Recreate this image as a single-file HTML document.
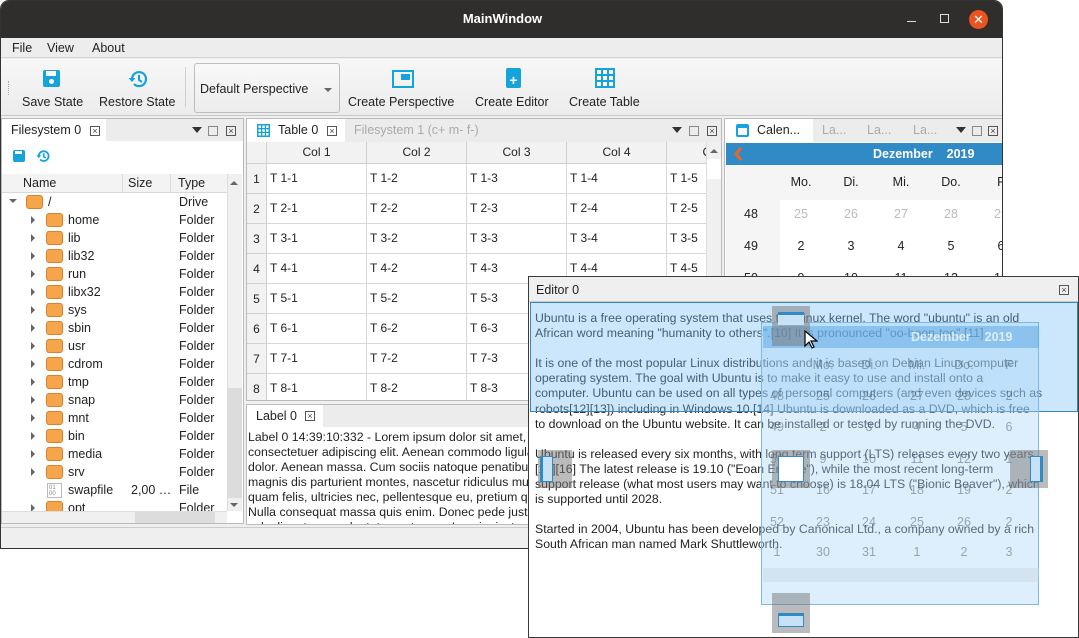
<!DOCTYPE html>
<html><head><meta charset="utf-8"><style>
*{box-sizing:border-box;margin:0;padding:0}
body{width:1079px;height:638px;background:#fff;position:relative;overflow:hidden;font-family:"Liberation Sans",sans-serif;font-size:12px;color:#222}
.a{position:absolute}
.nw{white-space:nowrap}
.x{position:absolute;width:10px;height:10px;border:1px solid #555;font-size:9px;line-height:8px;text-align:center;color:#444}
.fold{position:absolute;width:17px;height:14px;background:#f5a54a;border:1px solid #d9822b;border-radius:3px}
.arr{position:absolute;width:0;height:0;border-top:4px solid transparent;border-bottom:4px solid transparent;border-left:4px solid #666}
.cell{position:absolute;border-right:1px solid #d8d8d8;border-bottom:1px solid #d8d8d8;padding-left:3px;line-height:28px;background:#fff}
.hdr{position:absolute;background:#f2f2f2;border-right:1px solid #d0d0d0;border-bottom:1px solid #d0d0d0;text-align:center;line-height:21px}
</style></head><body>
<div class="a" style="left:0;top:0;width:1003px;height:549px;background:#efefef;border:1px solid #333;border-radius:9px 9px 0 0;overflow:hidden">
 <div class="a" style="left:0;top:0;width:1003px;height:37px;background:#302e2d"></div>
 <div class="a nw" style="left:0;top:10px;width:1003px;text-align:center;color:#fff;font-weight:bold;font-size:13px">MainWindow</div>
 <div class="a" style="left:906px;top:20px;width:9px;height:1px;background:#ddd"></div>
 <div class="a" style="left:939px;top:13px;width:9px;height:9px;border:1px solid #ddd"></div>
 <div class="a" style="left:968px;top:9px;width:19px;height:19px;border-radius:50%;background:#e95420;color:#fff;text-align:center;line-height:19px;font-size:13px">✕</div>
 <div class="a" style="left:0;top:37px;width:1003px;height:20px;background:#ededed;border-bottom:1px solid #d4d4d4"></div>
 <div class="a nw" style="left:11px;top:40px;font-size:12.5px">File</div>
 <div class="a nw" style="left:46px;top:40px;font-size:12.5px">View</div>
 <div class="a nw" style="left:91px;top:40px;font-size:12.5px">About</div>
 <div class="a" style="left:0;top:58px;width:1003px;height:57px;background:linear-gradient(#f7f7f7,#ececec);border-bottom:1px solid #c8c8c8"></div>
 <div class="a" style="left:7px;top:80px;width:2px;height:14px;border-left:1px dotted #aaa"></div>
 <div class="a" style="left:42px;top:69px;width:17px;height:17px;background:#15a3dc;border-radius:2px"><div class="a" style="left:3px;top:1px;width:10px;height:5px;background:#fff"></div><div class="a" style="left:6px;top:9px;width:5px;height:5px;border-radius:50%;background:#fff"></div></div>
 <div class="a nw" style="left:21px;top:94px;font-size:12.5px">Save State</div>
 <svg class="a" style="left:127px;top:68px" width="20" height="20" viewBox="0 0 20 20"><path d="M4 10a7 7 0 1 1 2 5" fill="none" stroke="#15a3dc" stroke-width="2.2"/><path d="M0.5 9h7l-3.5 4z" fill="#15a3dc"/><path d="M11 6v5l3 2" fill="none" stroke="#15a3dc" stroke-width="2"/></svg>
 <div class="a nw" style="left:98px;top:94px;font-size:12.5px">Restore State</div>
 <div class="a" style="left:184px;top:66px;width:1px;height:40px;background:#d0d0d0"></div>
 <div class="a" style="left:193px;top:62px;width:146px;height:50px;border:1px solid #bdbdbd;border-radius:3px;background:linear-gradient(#f9f9f9,#ececec)"></div>
 <div class="a nw" style="left:199px;top:81px;font-size:12.5px">Default Perspective</div>
 <div class="a" style="left:323px;top:87px;border-left:4px solid transparent;border-right:4px solid transparent;border-top:4px solid #666"></div>
 <div class="a" style="left:391px;top:69px;width:22px;height:18px;border:2px solid #15a3dc"><div class="a" style="left:7px;top:2px;width:9px;height:6px;background:#15a3dc"></div></div>
 <div class="a nw" style="left:347px;top:94px;font-size:12.5px">Create Perspective</div>
 <div class="a" style="left:505px;top:67px;width:15px;height:20px;background:#15a3dc;border-radius:2px;color:#fff;text-align:center;font-weight:bold;font-size:14px;line-height:24px">+</div>
 <div class="a nw" style="left:474px;top:94px;font-size:12.5px">Create Editor</div>
 <svg class="a" style="left:594px;top:67px" width="20" height="20"><rect x="0" y="0" width="20" height="20" fill="#15a3dc"/><g fill="#fff"><rect x="2" y="2" width="4" height="4"/><rect x="8" y="2" width="4" height="4"/><rect x="14" y="2" width="4" height="4"/><rect x="2" y="8" width="4" height="4"/><rect x="8" y="8" width="4" height="4"/><rect x="14" y="8" width="4" height="4"/><rect x="2" y="14" width="4" height="4"/><rect x="8" y="14" width="4" height="4"/><rect x="14" y="14" width="4" height="4"/></g></svg>
 <div class="a nw" style="left:568px;top:94px;font-size:12.5px">Create Table</div>

 <div class="a" style="left:0;top:117px;width:243px;height:406px;background:#fff;border:1px solid #bbb"></div>
 <div class="a" style="left:1px;top:118px;width:241px;height:22px;background:#ececec"></div>
 <div class="a" style="left:1px;top:118px;width:104px;height:22px;background:#fff"></div>
 <div class="a nw" style="left:10px;top:122px;font-size:12.5px">Filesystem 0</div>
 <div class="x" style="left:89px;top:125px">×</div>
 <div class="a" style="left:191px;top:126px;border-left:5px solid transparent;border-right:5px solid transparent;border-top:6px solid #333"></div>
 <div class="x" style="left:207px;top:125px;border-color:#888"></div>
 <div class="x" style="left:225px;top:125px">×</div>
 <div class="a" style="left:12px;top:149px;width:12px;height:12px;background:#15a3dc;border-radius:2px"><div class="a" style="left:2px;top:1px;width:7px;height:3px;background:#fff"></div></div>
 <svg class="a" style="left:35px;top:148px" width="14" height="14" viewBox="0 0 20 20"><path d="M4 10a7 7 0 1 1 2 5" fill="none" stroke="#15a3dc" stroke-width="2.6"/><path d="M0.5 9h7l-3.5 4z" fill="#15a3dc"/><path d="M11 6v5l3 2" fill="none" stroke="#15a3dc" stroke-width="2.4"/></svg>
 <div class="a" style="left:1px;top:173px;width:225px;height:19px;background:#f3f3f3;border-bottom:1px solid #d8d8d8"></div>
 <div class="a" style="left:121px;top:173px;width:1px;height:19px;background:#d8d8d8"></div>
 <div class="a" style="left:169px;top:173px;width:1px;height:19px;background:#d8d8d8"></div>
 <div class="a nw" style="left:22px;top:175px;font-size:12.5px">Name</div>
 <div class="a nw" style="left:127px;top:175px;font-size:12.5px">Size</div>
 <div class="a nw" style="left:177px;top:175px;font-size:12.5px">Type</div>
 <div class="a" style="left:226px;top:173px;width:15px;height:337px;background:#f0f0f0;border-left:1px solid #ddd"></div>
 <div class="a" style="left:226px;top:387px;width:15px;height:110px;background:#dcdcdc"></div>
 <div class="a" style="left:229px;top:180px;border-left:4px solid transparent;border-right:4px solid transparent;border-bottom:4px solid #666"></div>
 <div class="a" style="left:229px;top:502px;border-left:4px solid transparent;border-right:4px solid transparent;border-top:4px solid #666"></div>
 <div class="a" style="left:1px;top:510px;width:225px;height:12px;background:#f0f0f0;border-top:1px solid #ddd"></div>
 <div class="a" style="left:134px;top:511px;width:80px;height:11px;background:#dcdcdc"></div>
 <div id="tree"></div>

 <div class="a" style="left:245px;top:117px;width:476px;height:283px;background:#fff;border:1px solid #bbb;overflow:hidden">
  <div class="a" style="left:0;top:0;width:476px;height:23px;background:#ececec"></div>
  <div class="a" style="left:0;top:0;width:98px;height:23px;background:#fff"></div>
  <svg class="a" style="left:10px;top:5px" width="13" height="13"><rect width="13" height="13" fill="#15a3dc"/><g fill="#fff"><rect x="1.5" y="1.5" width="2.5" height="2.5"/><rect x="5.3" y="1.5" width="2.5" height="2.5"/><rect x="9" y="1.5" width="2.5" height="2.5"/><rect x="1.5" y="5.3" width="2.5" height="2.5"/><rect x="5.3" y="5.3" width="2.5" height="2.5"/><rect x="9" y="5.3" width="2.5" height="2.5"/><rect x="1.5" y="9" width="2.5" height="2.5"/><rect x="5.3" y="9" width="2.5" height="2.5"/><rect x="9" y="9" width="2.5" height="2.5"/></g></svg>
  <div class="a nw" style="left:31px;top:4px;font-size:12.5px">Table 0</div>
  <div class="x" style="left:80px;top:7px">×</div>
  <div class="a nw" style="left:107px;top:4px;font-size:12.5px;color:#aaa">Filesystem 1 (c+ m- f-)</div>
  <div class="a" style="left:425px;top:8px;border-left:5px solid transparent;border-right:5px solid transparent;border-top:6px solid #333"></div>
  <div class="x" style="left:442px;top:7px;border-color:#888"></div>
  <div class="x" style="left:460px;top:7px">×</div>
  <div id="tbl"></div>
  <div class="a" style="left:459px;top:23px;width:16px;height:259px;background:#f0f0f0;border-left:1px solid #ddd"></div>
  <div class="a" style="left:460px;top:40px;width:15px;height:20px;background:#fff"></div>
  <div class="a" style="left:463px;top:30px;border-left:4px solid transparent;border-right:4px solid transparent;border-bottom:4px solid #666"></div>
 </div>
 <div class="a" style="left:245px;top:403px;width:285px;height:121px;background:#fff;border:1px solid #bbb;overflow:hidden">
  <div class="a" style="left:0;top:0;width:285px;height:22px;background:#ececec"></div>
  <div class="a" style="left:0;top:0;width:76px;height:22px;background:#fff"></div>
  <div class="a nw" style="left:9px;top:4px;font-size:12.5px">Label 0</div>
  <div class="x" style="left:58px;top:6px">×</div>
  <div class="a nw" style="left:1px;top:25px;font-size:12.3px;line-height:15px">Label 0 14:39:10:332 - Lorem ipsum dolor sit amet,<br>consectetuer adipiscing elit. Aenean commodo ligula eget<br>dolor. Aenean massa. Cum sociis natoque penatibus et<br>magnis dis parturient montes, nascetur ridiculus mus. Donec<br>quam felis, ultricies nec, pellentesque eu, pretium quis, sem.<br>Nulla consequat massa quis enim. Donec pede justo, fringilla<br>vel, aliquet nec, vulputate eget, arcu. In enim justo</div>
 </div>
 <div class="a" style="left:723px;top:117px;width:280px;height:160px;background:#fff;border:1px solid #bbb;overflow:hidden">
  <div class="a" style="left:0;top:0;width:280px;height:23px;background:#ececec"></div>
  <div class="a" style="left:0;top:0;width:88px;height:23px;background:#fff"></div>
  <div class="a" style="left:11px;top:5px;width:13px;height:13px;border:2px solid #15a3dc;border-top-width:4px;border-radius:2px"></div>
  <div class="a nw" style="left:32px;top:4px;font-size:12.5px">Calen...</div>
  <div class="a nw" style="left:97px;top:4px;font-size:12.5px;color:#aaa">La...</div>
  <div class="a nw" style="left:142px;top:4px;font-size:12.5px;color:#aaa">La...</div>
  <div class="a nw" style="left:188px;top:4px;font-size:12.5px;color:#aaa">La...</div>
  <div class="a" style="left:231px;top:8px;border-left:5px solid transparent;border-right:5px solid transparent;border-top:6px solid #333"></div>
  <div class="x" style="left:247px;top:7px;border-color:#888"></div>
  <div class="x" style="left:263px;top:7px">×</div>
  <div class="a" style="left:1px;top:24px;width:278px;height:22px;background:#2f8ac6"></div>
  <svg class="a" style="left:8px;top:27px" width="10" height="16"><path d="M8 2L3 8l5 6" fill="none" stroke="#e8662a" stroke-width="3"/></svg>
  <div class="a nw" style="left:148px;top:28px;color:#fff;font-weight:bold;font-size:12.5px">Dezember&nbsp;&nbsp;&nbsp; 2019</div>
  <div class="a" style="left:1px;top:46px;width:278px;height:35px;background:#f5f5f5"></div>
  <div class="a" style="left:1px;top:81px;width:54px;height:80px;background:#f5f5f5"></div>
  <div id="cal"></div>
 </div>
 <div class="a" style="left:0;top:526px;width:1003px;height:23px;background:#efefef;border-top:1px solid #ccc"></div>
</div>

<div class="a" style="left:528px;top:276px;width:551px;height:362px;background:#fff;border:1px solid #3a3a3a">
 <div class="a" style="left:0;top:0;width:549px;height:25px;background:#efefef;border-bottom:1px solid #ccc"></div>
 <div class="a nw" style="left:7px;top:6px;font-size:12.5px">Editor 0</div>
 <div class="x" style="left:530px;top:8px">×</div>
 <div class="a nw" style="left:6px;top:34px;font-size:12.3px;line-height:15.1px">Ubuntu is a free operating system that uses the Linux kernel. The word "ubuntu" is an old<br>African word meaning "humanity to others".[10] It is pronounced "oo-boon-too".[11]<br><br>It is one of the most popular Linux distributions and it is based on Debian Linux computer<br>operating system. The goal with Ubuntu is to make it easy to use and install onto a<br>computer. Ubuntu can be used on all types of personal computers (and even devices such as<br>robots[12][13]) including in Windows 10.[14] Ubuntu is downloaded as a DVD, which is free<br>to download on the Ubuntu website. It can be installed or tested by running the DVD.<br><br>Ubuntu is released every six months, with long term support (LTS) releases every two years.<br>[15][16] The latest release is 19.10 ("Eoan Ermine"), while the most recent long-term<br>support release (what most users may want to choose) is 18.04 LTS ("Bionic Beaver"), which<br>is supported until 2028.<br><br>Started in 2004, Ubuntu has been developed by Canonical Ltd., a company owned by a rich<br>South African man named Mark Shuttleworth.</div>
</div>
<div class="a" style="left:530px;top:302px;width:548px;height:110px;background:rgba(120,190,245,0.38);border:1px solid #3a84c0"></div>
<div class="a" style="left:761px;top:322px;width:278px;height:283px;background:rgba(170,215,250,0.4);border:1px solid #7db8e6">
 <div class="a" style="left:1px;top:3px;width:276px;height:22px;background:rgba(80,160,225,0.45)"></div>
 <div class="a nw" style="left:149px;top:7px;color:rgba(255,255,255,0.7);font-weight:bold;font-size:12.5px">Dezember&nbsp;&nbsp;&nbsp; 2019</div>
 <div id="gcal"></div>
 <div class="a" style="left:1px;top:245px;width:276px;height:14px;background:rgba(200,210,220,0.4)"></div>
</div>
<div class="a" style="left:772px;top:306px;width:38px;height:40px;background:rgba(120,120,120,0.5)"><div class="a" style="left:6px;top:6px;width:26px;height:13px;background:#c8e2f5;border-top:3px solid #2f8ac6"></div></div>
<div class="a" style="left:538px;top:450px;width:34px;height:38px;background:rgba(120,120,120,0.5)"><div class="a" style="left:2px;top:6px;width:13px;height:26px;background:#c8e2f5;border:1px solid #2f8ac6;border-left-width:3px"></div></div>
<div class="a" style="left:772px;top:450px;width:38px;height:38px;background:rgba(120,120,120,0.5)"><div class="a" style="left:6px;top:6px;width:26px;height:26px;background:#fff;border:1px solid #2f8ac6"></div></div>
<div class="a" style="left:1010px;top:450px;width:38px;height:38px;background:rgba(120,120,120,0.5)"><div class="a" style="left:20px;top:6px;width:13px;height:26px;background:#c8e2f5;border:1px solid #2f8ac6;border-right-width:3px"></div></div>
<div class="a" style="left:772px;top:593px;width:38px;height:40px;background:rgba(120,120,120,0.5)"><div class="a" style="left:6px;top:20px;width:26px;height:14px;background:#c8e2f5;border:1px solid #2f8ac6;border-top-width:3px"></div></div>
<svg class="a" style="left:804px;top:330px" width="14" height="20"><path d="M1 1v15l4-4 3 6 2-1-3-6h6z" fill="#fff" stroke="#000" stroke-width="1.2"/></svg>

<script>
(function(){
var t=document.getElementById('tree'),h='';
var n=[['home','Folder'],['lib','Folder'],['lib32','Folder'],['run','Folder'],['libx32','Folder'],['sys','Folder'],['sbin','Folder'],['usr','Folder'],['cdrom','Folder'],['tmp','Folder'],['snap','Folder'],['mnt','Folder'],['bin','Folder'],['media','Folder'],['srv','Folder'],['swapfile','File'],['opt','Folder']];
h+='<div class="a" style="left:8px;top:198px;border-left:4px solid transparent;border-right:4px solid transparent;border-top:4px solid #666"></div><div class="fold" style="left:25px;top:194px"></div><div class="a nw" style="left:47px;top:194px;font-size:12.5px">/</div><div class="a nw" style="left:178px;top:194px;font-size:12.5px">Drive</div>';
for(var i=0;i<n.length;i++){var y=212+i*18;
 if(n[i][1]=='File'){h+='<div class="a" style="left:46px;top:'+(y)+'px;width:15px;height:15px;border:1px solid #bbb;font-size:6px;color:#888;line-height:6px;padding:1px">01<br>00</div><div class="a nw" style="left:130px;top:'+(y)+'px;font-size:12.5px">2,00 …</div>';}
 else{h+='<div class="arr" style="left:30px;top:'+(y+3)+'px"></div><div class="fold" style="left:45px;top:'+(y)+'px"></div>';}
 h+='<div class="a nw" style="left:67px;top:'+(y)+'px;font-size:12.5px">'+n[i][0]+'</div><div class="a nw" style="left:178px;top:'+(y)+'px;font-size:12.5px">'+n[i][1]+'</div>';}
t.outerHTML='<div class="a" style="left:0;top:0;width:226px;height:510px;overflow:hidden">'+h+'</div>';
var tb=document.getElementById('tbl'),s='';var cx=[20,120,220,320,420];
s+='<div class="hdr" style="left:0;top:23px;width:20px;height:22px"></div>';
for(var c=0;c<5;c++)s+='<div class="hdr" style="left:'+cx[c]+'px;top:23px;width:100px;height:22px">Col '+(c+1)+'</div>';
for(var r=0;r<8;r++){var y=45+r*30;s+='<div class="hdr" style="left:0;top:'+y+'px;width:20px;height:30px;line-height:30px">'+(r+1)+'</div>';
 for(var c=0;c<5;c++)s+='<div class="cell" style="left:'+cx[c]+'px;top:'+y+'px;width:100px;height:30px">T '+(r+1)+'-'+(c+1)+'</div>';}
tb.outerHTML=s;
var cl=document.getElementById('cal'),g='';var xs=[76,126,176,226,276];
var wd=['Mo.','Di.','Mi.','Do.','F'];for(var i=0;i<5;i++)g+='<div class="a nw" style="left:'+(xs[i]-12)+'px;top:56px;width:24px;text-align:center;font-size:12.5px">'+wd[i]+'</div>';
var rows=[['48','25','26','27','28','29'],['49','2','3','4','5','6'],['50','9','10','11','12','13']];
for(var r=0;r<3;r++){var y=88+r*32;g+='<div class="a nw" style="left:14px;top:'+y+'px;width:24px;text-align:center;font-size:12.5px">'+rows[r][0]+'</div>';
 for(var i=0;i<5;i++)g+='<div class="a nw" style="left:'+(xs[i]-12)+'px;top:'+y+'px;width:24px;text-align:center;font-size:12.5px;color:'+(r==0?'#bbb':'#222')+'">'+rows[r][i+1]+'</div>';}
cl.outerHTML=g;
var gc=document.getElementById('gcal'),q='';var gx=[61,107,155,202,247];
var gr=[['','Mo.','Di.','Mi.','Do.','F'],['48','25','26','27','28','2'],['49','2','3','4','5','6'],['50','9','10','11','12','1'],['51','16','17','18','19','2'],['52','23','24','25','26','2'],['1','30','31','1','2','3']];
var gy=[35,66,97,129,160,192,222];
for(var r=0;r<7;r++){
 q+='<div class="a nw" style="left:3px;top:'+gy[r]+'px;width:24px;text-align:center;font-size:12.5px;color:rgba(60,70,80,0.45)">'+gr[r][0]+'</div>';
 for(var i=0;i<5;i++)q+='<div class="a nw" style="left:'+(gx[i]-12)+'px;top:'+gy[r]+'px;width:24px;text-align:center;font-size:12.5px;color:rgba(60,70,80,0.45)">'+gr[r][i+1]+'</div>';}
gc.outerHTML=q;
})();
</script>
</body></html>
